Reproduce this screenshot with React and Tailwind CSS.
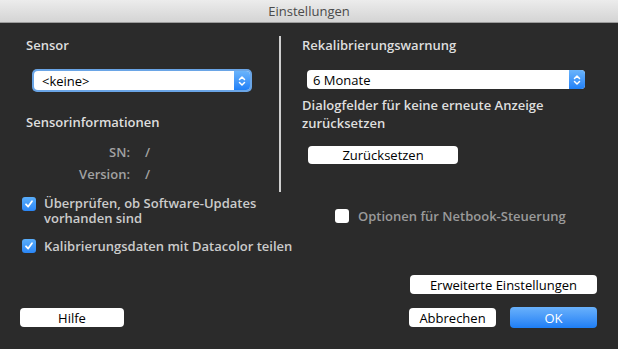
import React from "react";

const Stepper = () => (
  <div className="w-[16px] self-stretch rounded-r-[4px] bg-gradient-to-b from-[#6ab4fb] to-[#1f80f7] flex items-center justify-center">
    <svg width="8" height="12" viewBox="0 0 8 12" fill="none" stroke="white" strokeWidth="1.5" strokeLinecap="round" strokeLinejoin="round">
      <path d="M1.5 4.5 L4 2 L6.5 4.5" />
      <path d="M1.5 7.5 L4 10 L6.5 7.5" />
    </svg>
  </div>
);

const Check = ({ checked }) =>
  checked ? (
    <div className="w-[14px] h-[14px] rounded-[3px] bg-gradient-to-b from-[#5aaefb] to-[#2a86f6] flex items-center justify-center shrink-0">
      <svg width="10" height="10" viewBox="0 0 10 10" fill="none" stroke="white" strokeWidth="1.8" strokeLinecap="round" strokeLinejoin="round">
        <path d="M2 5.3 L4.2 7.6 L8 2.3" />
      </svg>
    </div>
  ) : (
    <div className="w-[14px] h-[14px] rounded-[3px] bg-white shrink-0" />
  );

export default function App() {
  return (
    <div
      className="w-[618px] h-[349px] bg-[#2b2b2b] flex flex-col text-[13px] leading-[16px]"
      style={{ fontFamily: '"Open Sans", "DejaVu Sans", sans-serif' }}
    >
      {/* title bar */}
      <div className="h-[23px] shrink-0 bg-gradient-to-b from-[#ececec] to-[#d4d4d4] border-b border-[#9c9c9c] flex items-center justify-center text-[#4a4a4a]">
        Einstellungen
      </div>

      {/* top block */}
      <div className="flex mt-[13px]">
        <div className="w-[279px] pl-[26px] flex flex-col">
          <div className="text-[#dedede] font-semibold mt-[1px]">Sensor</div>
          <div className="ml-[6px] mt-[16px] w-[220px] h-[23px] rounded-[5px] bg-[#6aa5e6] p-[2px] flex">
            <div className="flex-1 flex rounded-[4px] bg-white">
              <div className="flex-1 pl-[8px] text-black flex items-center">&lt;keine&gt;</div>
              <Stepper />
            </div>
          </div>
          <div className="text-[#dedede] font-semibold mt-[22px]">Sensorinformationen</div>
          <div className="mt-[14px] flex text-[#a2a2a2] font-semibold">
            <div className="w-[104px] text-right">SN:</div>
            <div className="ml-[15px]">/</div>
          </div>
          <div className="mt-[6px] flex text-[#a2a2a2] font-semibold">
            <div className="w-[104px] text-right">Version:</div>
            <div className="ml-[15px]">/</div>
          </div>
        </div>
        <div className="w-[2px] h-[156px] bg-[#cfcfcf]" />
        <div className="flex-1 pl-[21px] flex flex-col">
          <div className="text-[#dedede] font-semibold mt-[1px]">Rekalibrierungswarnung</div>
          <div className="ml-[5px] mt-[17px] w-[278px] h-[19px] flex rounded-[4px] bg-white">
            <div className="flex-1 pl-[6px] text-black flex items-center">6 Monate</div>
            <Stepper />
          </div>
          <div className="mt-[7px] text-[#dedede] font-semibold flex flex-col leading-[18px]">
            <span>Dialogfelder für keine erneute Anzeige</span>
            <span>zurücksetzen</span>
          </div>
          <button className="ml-[6px] mt-[14px] w-[150px] h-[18px] rounded-[4px] bg-white text-black flex items-center justify-center">
            Zurücksetzen
          </button>
        </div>
      </div>

      {/* checkboxes */}
      <div className="flex mt-[4px]">
        <div className="w-[320px] pl-[22px] flex flex-col">
          <div className="flex gap-[8px]">
            <div className="mt-[1px]"><Check checked /></div>
            <div className="text-[#cbcbcb] font-semibold flex flex-col leading-[14px] gap-[1px]">
              <span>Überprüfen, ob Software-Updates</span>
              <span>vorhanden sind</span>
            </div>
          </div>
          <div className="flex gap-[8px] mt-[13px] items-center">
            <Check checked />
            <div className="text-[#cbcbcb] font-semibold">Kalibrierungsdaten mit Datacolor teilen</div>
          </div>
        </div>
        <div className="flex gap-[9px] items-center h-[14px] mt-[13px] ml-[15px]">
          <Check />
          <div className="text-[#9a9a9a] font-semibold">Optionen für Netbook-Steuerung</div>
        </div>
      </div>

      {/* bottom buttons */}
      <div className="flex justify-end pr-[21px] mt-[21px]">
        <button className="w-[187px] h-[19px] rounded-[4px] bg-white text-black flex items-center justify-center">
          Erweiterte Einstellungen
        </button>
      </div>
      <div className="flex items-center pl-[20px] pr-[21px] mt-[13px]">
        <button className="w-[104px] h-[19px] rounded-[4px] bg-white text-black flex items-center justify-center">
          Hilfe
        </button>
        <div className="flex-1" />
        <button className="w-[87px] h-[19px] rounded-[4px] bg-white text-black flex items-center justify-center">
          Abbrechen
        </button>
        <button className="ml-[14px] w-[87px] h-[21px] rounded-[4px] bg-gradient-to-b from-[#69b1fb] to-[#1c7ef5] text-white flex items-center justify-center">
          OK
        </button>
      </div>
    </div>
  );
}
